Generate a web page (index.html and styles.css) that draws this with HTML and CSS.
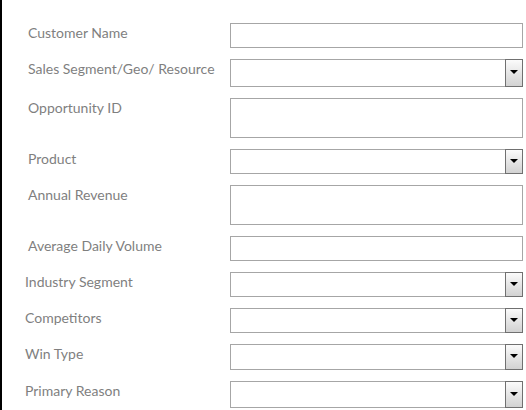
FILE: index.html
```html
<!DOCTYPE html>
<html>
<head>
<meta charset="utf-8">
<link rel="stylesheet" href="styles.css">
</head>
<body>
<div class="page">
  <div class="row">
    <label class="label">Customer Name</label>
    <div class="field text"></div>
  </div>
  <div class="row">
    <label class="label">Sales Segment/Geo/ Resource</label>
    <div class="field combo h28"><span class="drop"><span class="arrow"></span></span></div>
  </div>
  <div class="row">
    <label class="label">Opportunity ID</label>
    <div class="field area"></div>
  </div>
  <div class="row">
    <label class="label">Product</label>
    <div class="field combo"><span class="drop"><span class="arrow"></span></span></div>
  </div>
  <div class="row">
    <label class="label">Annual Revenue</label>
    <div class="field area"></div>
  </div>
  <div class="row">
    <label class="label">Average Daily Volume</label>
    <div class="field text"></div>
  </div>
  <div class="row">
    <label class="label shift">Industry Segment</label>
    <div class="field combo"><span class="drop"><span class="arrow"></span></span></div>
  </div>
  <div class="row">
    <label class="label shift">Competitors</label>
    <div class="field combo"><span class="drop"><span class="arrow"></span></span></div>
  </div>
  <div class="row">
    <label class="label shift">Win Type</label>
    <div class="field combo h26"><span class="drop"><span class="arrow"></span></span></div>
  </div>
  <div class="row">
    <label class="label shift">Primary Reason</label>
    <div class="field combo h27"><span class="drop"><span class="arrow"></span></span></div>
  </div>
</div>
</body>
</html>
```
FILE: styles.css
```css
html, body {
  margin: 0;
  padding: 0;
  background: #ffffff;
}
.page {
  box-sizing: border-box;
  min-height: 410px;
  border-left: 2px solid #000000;
  padding-top: 23px;
  font-family: Lato, "Open Sans", sans-serif;
  font-size: 14px;
  color: #7f7f7f;
}
.row {
  display: flex;
  align-items: flex-start;
  margin-bottom: 11px;
}
.label {
  box-sizing: border-box;
  width: 228px;
  padding-left: 26px;
  line-height: 20px;
  white-space: nowrap;
}
.label.shift {
  padding-left: 23px;
}
.field {
  box-sizing: border-box;
  width: 293px;
  height: 25px;
  border: 1px solid #a6a6a6;
  background: #ffffff;
  display: flex;
  justify-content: flex-end;
}
.field.area {
  height: 40px;
}
.field.h28 { height: 28px; }
.field.h26 { height: 26px; }
.field.h27 { height: 27px; }
.combo {
  border-right: none;
}
.drop {
  box-sizing: border-box;
  width: 18px;
  margin: -1px 0;
  border: 1px solid #707070;
  background: linear-gradient(#fbfbfb, #e6e6e6 50%, #d2d2d2);
  display: flex;
  justify-content: center;
  align-items: center;
}
.arrow {
  width: 0;
  height: 0;
  border-left: 4px solid transparent;
  border-right: 4px solid transparent;
  border-top: 4px solid #000000;
  margin-top: -2px;
}
```
